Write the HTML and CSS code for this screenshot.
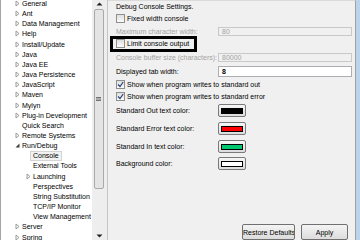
FILE: index.html
```html
<!DOCTYPE html>
<html lang="en">
<head>
    <meta charset="UTF-8">
    <meta name="viewport" content="width=device-width, initial-scale=1.0">
    <title>Preferences - Console</title>
    <link rel="stylesheet" href="styles.css">
</head>
<body>
    <div class="tree">
        <div class="nodes">
            <div class="node"><span class="twisty"><svg width="5" height="7"><path d="M1 1 L4 3.5 L1 6 Z" fill="none" stroke="#9a9a9a"/></svg></span>General</div>
            <div class="node"><span class="twisty"><svg width="5" height="7"><path d="M1 1 L4 3.5 L1 6 Z" fill="none" stroke="#9a9a9a"/></svg></span>Ant</div>
            <div class="node"><span class="twisty"><svg width="5" height="7"><path d="M1 1 L4 3.5 L1 6 Z" fill="none" stroke="#9a9a9a"/></svg></span>Data Management</div>
            <div class="node"><span class="twisty"><svg width="5" height="7"><path d="M1 1 L4 3.5 L1 6 Z" fill="none" stroke="#9a9a9a"/></svg></span>Help</div>
            <div class="node"><span class="twisty"><svg width="5" height="7"><path d="M1 1 L4 3.5 L1 6 Z" fill="none" stroke="#9a9a9a"/></svg></span>Install/Update</div>
            <div class="node"><span class="twisty"><svg width="5" height="7"><path d="M1 1 L4 3.5 L1 6 Z" fill="none" stroke="#9a9a9a"/></svg></span>Java</div>
            <div class="node"><span class="twisty"><svg width="5" height="7"><path d="M1 1 L4 3.5 L1 6 Z" fill="none" stroke="#9a9a9a"/></svg></span>Java EE</div>
            <div class="node"><span class="twisty"><svg width="5" height="7"><path d="M1 1 L4 3.5 L1 6 Z" fill="none" stroke="#9a9a9a"/></svg></span>Java Persistence</div>
            <div class="node"><span class="twisty"><svg width="5" height="7"><path d="M1 1 L4 3.5 L1 6 Z" fill="none" stroke="#9a9a9a"/></svg></span>JavaScript</div>
            <div class="node"><span class="twisty"><svg width="5" height="7"><path d="M1 1 L4 3.5 L1 6 Z" fill="none" stroke="#9a9a9a"/></svg></span>Maven</div>
            <div class="node"><span class="twisty"><svg width="5" height="7"><path d="M1 1 L4 3.5 L1 6 Z" fill="none" stroke="#9a9a9a"/></svg></span>Mylyn</div>
            <div class="node"><span class="twisty"><svg width="5" height="7"><path d="M1 1 L4 3.5 L1 6 Z" fill="none" stroke="#9a9a9a"/></svg></span>Plug-in Development</div>
            <div class="node"><span class="twisty"></span>Quick Search</div>
            <div class="node"><span class="twisty"><svg width="5" height="7"><path d="M1 1 L4 3.5 L1 6 Z" fill="none" stroke="#9a9a9a"/></svg></span>Remote Systems</div>
            <div class="node"><span class="twisty"><svg width="5" height="7"><path d="M4.5 1.5 L4.5 5.5 L0.5 5.5 Z" fill="#3c3c3c"/></svg></span>Run/Debug</div>
            <div class="node child"><span class="twisty"></span><span class="selected">Console</span></div>
            <div class="node child"><span class="twisty"></span>External Tools</div>
            <div class="node child"><span class="twisty"><svg width="5" height="7"><path d="M1 1 L4 3.5 L1 6 Z" fill="none" stroke="#9a9a9a"/></svg></span>Launching</div>
            <div class="node child"><span class="twisty"></span>Perspectives</div>
            <div class="node child"><span class="twisty"></span>String Substitution</div>
            <div class="node child"><span class="twisty"></span>TCP/IP Monitor</div>
            <div class="node child"><span class="twisty"></span>View Management</div>
            <div class="node"><span class="twisty"><svg width="5" height="7"><path d="M1 1 L4 3.5 L1 6 Z" fill="none" stroke="#9a9a9a"/></svg></span>Server</div>
            <div class="node"><span class="twisty"><svg width="5" height="7"><path d="M1 1 L4 3.5 L1 6 Z" fill="none" stroke="#9a9a9a"/></svg></span>Spring</div>
        </div>
    </div>

    <div class="scrollbar">
        <div class="arrow"><svg width="7" height="4"><path d="M0.5 3.5 L3.5 0.5 L6.5 3.5 Z" fill="#222"/></svg></div>
        <div class="thumb">
            <svg width="5" height="4"><path d="M0 0.5 H5 M0 2 H5 M0 3.5 H5" stroke="#555" stroke-width="0.8"/></svg>
        </div>
        <div class="arrow down"><svg width="7" height="4"><path d="M0.5 0.5 L3.5 3.5 L6.5 0.5 Z" fill="#222"/></svg></div>
    </div>

    <div class="page">
        <div class="title">Debug Console Settings.</div>

        <div class="check-row fixed"><span class="box"></span>Fixed width console</div>

        <div class="field-row max">
            <span class="label disabled">Maximum character width:</span>
            <span class="field disabled">80</span>
        </div>

        <div class="check-row highlight"><span class="box"></span>Limit console output</div>

        <div class="field-row buffer">
            <span class="label disabled">Console buffer size (characters):</span>
            <span class="field disabled">80000</span>
        </div>

        <div class="field-row tab">
            <span class="label">Displayed tab width:</span>
            <span class="field">8</span>
        </div>

        <div class="check-row out"><span class="box"><svg width="7" height="7"><path d="M1 3.5 L3 5.5 L6.2 1" fill="none" stroke="#2a3f7a" stroke-width="1.2"/></svg></span>Show when program writes to standard out</div>
        <div class="check-row"><span class="box"><svg width="7" height="7"><path d="M1 3.5 L3 5.5 L6.2 1" fill="none" stroke="#2a3f7a" stroke-width="1.2"/></svg></span>Show when program writes to standard error</div>

        <div class="color-row first">
            <span class="label">Standard Out text color:</span>
            <span class="color-btn"><span class="swatch" style="background: #000000;"></span></span>
        </div>
        <div class="color-row">
            <span class="label">Standard Error text color:</span>
            <span class="color-btn"><span class="swatch" style="background: #ff0000;"></span></span>
        </div>
        <div class="color-row">
            <span class="label">Standard In text color:</span>
            <span class="color-btn"><span class="swatch" style="background: #00c86e;"></span></span>
        </div>
        <div class="color-row last">
            <span class="label">Background color:</span>
            <span class="color-btn"><span class="swatch" style="background: #ffffff;"></span></span>
        </div>

        <div class="buttons">
            <button class="restore">Restore Defaults</button>
            <button class="apply">Apply</button>
        </div>
    </div>

    <div class="edge"></div>
</body>
</html>
```

FILE: styles.css
```css
body {
    margin: 0;
    padding: 0;
    width: 360px;
    height: 240px;
    overflow: hidden;
    display: flex;
    font-family: "Liberation Sans", Arial, sans-serif;
    font-size: 7px;
    color: #000;
    background: #f0f0f0;
}
.tree {
    width: 91px;
    height: 240px;
    background: white;
    border-left: 1px solid #a6a6a6;
    overflow: hidden;
}
.nodes {
    margin-top: -1.6px;
}
.node {
    display: flex;
    align-items: center;
    height: 10.17px;
    white-space: nowrap;
}
.twisty {
    width: 7px;
    margin-left: 14px;
    display: flex;
    align-items: center;
}
.node.child .twisty {
    margin-left: 25px;
}
.selected {
    margin-left: -3px;
    padding: 0 2px;
    line-height: 8px;
    background: #f2f2f2;
    border: 1px solid #d4d4d4;
}
.scrollbar {
    width: 15px;
    height: 240px;
    background: #eeeeee;
    border-right: 1px solid #c4c4c4;
    display: flex;
    flex-direction: column;
    align-items: center;
}
.arrow {
    height: 8px;
    display: flex;
    align-items: center;
    justify-content: center;
}
.arrow.down {
    margin-top: auto;
}
.thumb {
    margin-top: 1px;
    margin-left: -2px;
    width: 8px;
    height: 178px;
    background: #e4e4e4;
    border: 1px solid #a9a9a9;
    border-radius: 2px;
    display: flex;
    align-items: center;
    justify-content: center;
}
.page {
    width: 248px;
    height: 240px;
    box-sizing: border-box;
    border-right: 1px solid #a0a0a0;
    border-top: 1px solid #dadada;
    padding: 0 3px 0 8px;
    display: flex;
    flex-direction: column;
    overflow: hidden;
}
.edge {
    width: 4px;
    height: 240px;
    background: #bcd3ec;
}
.title {
    height: 12px;
    line-height: 12px;
}
.check-row {
    display: flex;
    align-items: center;
    height: 12px;
    white-space: nowrap;
}
.box {
    width: 7px;
    height: 7px;
    border: 1px solid #8f8f8f;
    background: linear-gradient(#dedede, #fbfbfb);
    margin-right: 2px;
    display: flex;
}
.check-row.highlight {
    margin-left: -6px;
    width: 87px;
    height: 16px;
    box-sizing: border-box;
    border: 3px solid #000;
    padding-left: 3px;
}
.field-row {
    display: flex;
    align-items: center;
    white-space: nowrap;
}
.field-row.max {
    margin-top: 2px;
    height: 10px;
}
.field-row.buffer {
    margin-top: 1px;
    height: 10px;
}
.field-row.tab {
    margin-top: 4px;
    height: 11px;
}
.label {
    width: 102px;
    flex-shrink: 0;
}
.disabled {
    color: #a3a3a3;
}
.field {
    flex: 1;
    height: 100%;
    box-sizing: border-box;
    border: 1px solid #c9c9c9;
    padding-left: 3px;
    display: flex;
    align-items: center;
}
.field-row.tab .field {
    background: white;
    border-color: #abadb3;
    font-weight: bold;
}
.check-row.out {
    margin-top: 2px;
}
.color-row {
    display: flex;
    align-items: center;
    height: 13px;
    margin-top: 5px;
    white-space: nowrap;
}
.color-row.first {
    margin-top: 2px;
}
.color-row.last {
    margin-top: 4px;
}
.color-btn {
    width: 28px;
    height: 13px;
    box-sizing: border-box;
    border: 1px solid #7a7a7a;
    border-radius: 2px;
    background: linear-gradient(#f6f6f6, #dddddd);
    display: flex;
    align-items: center;
    justify-content: center;
}
.swatch {
    width: 22px;
    height: 6px;
    box-sizing: border-box;
    border: 1px solid #000;
}
.buttons {
    margin-top: 54px;
    display: flex;
    justify-content: flex-end;
    gap: 6px;
    padding-right: 4px;
}
button {
    font-family: "Liberation Sans", Arial, sans-serif;
    font-size: 7px;
    height: 16px;
    padding: 0;
    white-space: nowrap;
    overflow: hidden;
    border: 1px solid #707070;
    border-radius: 2px;
    background: linear-gradient(#f4f4f4, #dcdcdc);
    color: #000;
}
.restore {
    width: 53px;
}
.apply {
    width: 47px;
}
```
